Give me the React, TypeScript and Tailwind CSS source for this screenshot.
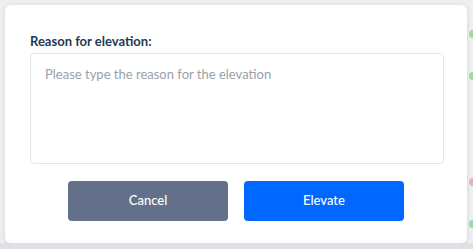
import React from 'react';

const Dot: React.FC<{ color: string }> = ({ color }) => (
  <div className={`w-[4px] h-[8px] rounded-l-full ${color}`} />
);

const App: React.FC = () => {
  return (
    <div className="w-[473px] h-[249px] bg-[#eceef0] overflow-hidden flex flex-col" style={{ fontFamily: 'Lato, "Open Sans", sans-serif' }}>
      <div className="flex pt-[5px] pl-[5px]">
        <div className="w-[462px] h-[238px] bg-white rounded-[6px] shadow-[0_1px_4px_rgba(0,0,0,0.12)] pl-[25px] pr-[23px] pt-[28px]">
          <label className="block text-[13px] font-bold leading-[16px] text-[#1e3a56]">Reason for elevation:</label>
          <textarea
            className="mt-[4px] block w-[414px] h-[111px] resize-none rounded-[4px] border border-[#e3e6ea] px-[14px] py-[11px] text-[13px] leading-[18px] text-[#333] placeholder:text-[#9aa1ab] outline-none"
            placeholder="Please type the reason for the elevation"
          />
          <div className="flex justify-center gap-[16px] mt-[17px] pr-[2px]">
            <button className="w-[160px] h-[40px] rounded-[4px] bg-[#647089] text-white text-[13px] font-medium">Cancel</button>
            <button className="w-[160px] h-[40px] rounded-[4px] bg-[#0068ff] text-white text-[13px] font-medium">Elevate</button>
          </div>
        </div>
        <div className="flex-1 flex flex-col items-end pt-[25px] gap-[34px] opacity-70">
          <Dot color="bg-[#7dd08a]" />
          <Dot color="bg-[#7dd08a]" />
          <div className="h-[30px]" />
          <Dot color="bg-[#e79aa8]" />
          <Dot color="bg-[#7dd08a]" />
        </div>
      </div>
      <div className="flex-1 bg-[#dde1e6]" />
    </div>
  );
};

export default App;
